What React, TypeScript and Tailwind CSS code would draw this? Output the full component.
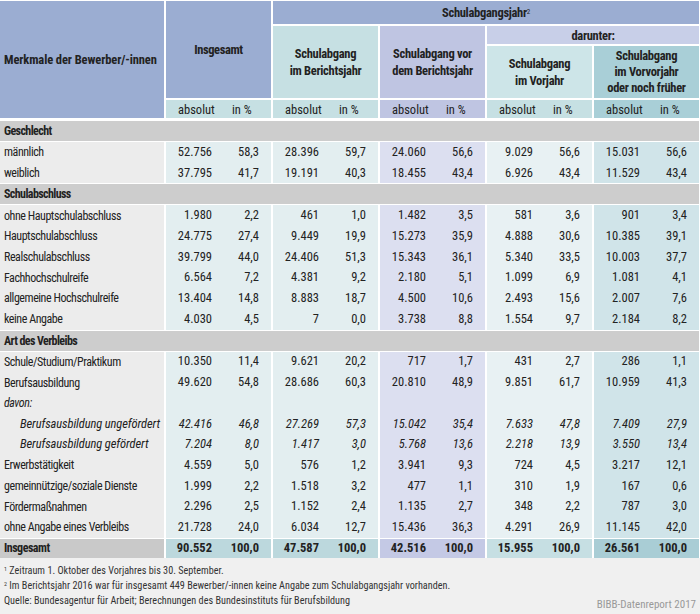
import React from "react";

type Row =
  | { kind: "section"; label: string }
  | { kind: "row"; label: string; vals: string[]; italic?: boolean; indent?: boolean };

const rows: Row[] = [
  { kind: "section", label: "Geschlecht" },
  { kind: "row", label: "männlich", vals: ["52.756", "58,3", "28.396", "59,7", "24.060", "56,6", "9.029", "56,6", "15.031", "56,6"] },
  { kind: "row", label: "weiblich", vals: ["37.795", "41,7", "19.191", "40,3", "18.455", "43,4", "6.926", "43,4", "11.529", "43,4"] },
  { kind: "section", label: "Schulabschluss" },
  { kind: "row", label: "ohne Hauptschulabschluss", vals: ["1.980", "2,2", "461", "1,0", "1.482", "3,5", "581", "3,6", "901", "3,4"] },
  { kind: "row", label: "Hauptschulabschluss", vals: ["24.775", "27,4", "9.449", "19,9", "15.273", "35,9", "4.888", "30,6", "10.385", "39,1"] },
  { kind: "row", label: "Realschulabschluss", vals: ["39.799", "44,0", "24.406", "51,3", "15.343", "36,1", "5.340", "33,5", "10.003", "37,7"] },
  { kind: "row", label: "Fachhochschulreife", vals: ["6.564", "7,2", "4.381", "9,2", "2.180", "5,1", "1.099", "6,9", "1.081", "4,1"] },
  { kind: "row", label: "allgemeine Hochschulreife", vals: ["13.404", "14,8", "8.883", "18,7", "4.500", "10,6", "2.493", "15,6", "2.007", "7,6"] },
  { kind: "row", label: "keine Angabe", vals: ["4.030", "4,5", "7", "0,0", "3.738", "8,8", "1.554", "9,7", "2.184", "8,2"] },
  { kind: "section", label: "Art des Verbleibs" },
  { kind: "row", label: "Schule/Studium/Praktikum", vals: ["10.350", "11,4", "9.621", "20,2", "717", "1,7", "431", "2,7", "286", "1,1"] },
  { kind: "row", label: "Berufsausbildung", vals: ["49.620", "54,8", "28.686", "60,3", "20.810", "48,9", "9.851", "61,7", "10.959", "41,3"] },
  { kind: "row", label: "davon:", vals: ["", "", "", "", "", "", "", "", "", ""], italic: true },
  { kind: "row", label: "Berufsausbildung ungefördert", vals: ["42.416", "46,8", "27.269", "57,3", "15.042", "35,4", "7.633", "47,8", "7.409", "27,9"], italic: true, indent: true },
  { kind: "row", label: "Berufsausbildung gefördert", vals: ["7.204", "8,0", "1.417", "3,0", "5.768", "13,6", "2.218", "13,9", "3.550", "13,4"], italic: true, indent: true },
  { kind: "row", label: "Erwerbstätigkeit", vals: ["4.559", "5,0", "576", "1,2", "3.941", "9,3", "724", "4,5", "3.217", "12,1"] },
  { kind: "row", label: "gemeinnützige/soziale Dienste", vals: ["1.999", "2,2", "1.518", "3,2", "477", "1,1", "310", "1,9", "167", "0,6"] },
  { kind: "row", label: "Fördermaßnahmen", vals: ["2.296", "2,5", "1.152", "2,4", "1.135", "2,7", "348", "2,2", "787", "3,0"] },
  { kind: "row", label: "ohne Angabe eines Verbleibs", vals: ["21.728", "24,0", "6.034", "12,7", "15.436", "36,3", "4.291", "26,9", "11.145", "42,0"] },
];

const totals = ["90.552", "100,0", "47.587", "100,0", "42.516", "100,0", "15.955", "100,0", "26.561", "100,0"];

// column colours, one per group
const dataBg = ["bg-[#e3eef0]", "bg-[#e3eef0]", "bg-[#dcdff0]", "bg-[#e8f1f3]", "bg-[#d0e4e9]"];
const unitBg = ["bg-[#c6e0e3]", "bg-[#c6e0e3]", "bg-[#bfc5e2]", "bg-[#c6e0e3]", "bg-[#a9cfd7]"];
const totalBg = ["bg-[#bcd8dd]", "bg-[#bcd8dd]", "bg-[#c4c9e5]", "bg-[#c6dfe3]", "bg-[#a9cdd5]"];

const font = { fontFamily: '"Liberation Sans Narrow", "Roboto Condensed", "DejaVu Sans Condensed", "Liberation Sans", sans-serif' };

const Pair = ({ a, b, bg, className = "" }: { a: string; b: string; bg: string; className?: string }) => (
  <div className={`flex w-[105px] ${bg} ${className}`}>
    <div className="w-[58px] pr-3 text-right">{a}</div>
    <div className="w-[47px] pr-3 text-right">{b}</div>
  </div>
);

export default function App() {
  return (
    <div className="w-[700px] h-[614px] bg-white text-[12.5px] text-[#222]" style={font}>
      {/* Header */}
      <div className="grid grid-cols-[164px_105px_105px_105px_105px_105px] grid-rows-[23px_18px_52px_18px] gap-[2px] pt-px leading-[17px] font-bold">
        <div className="row-span-4 bg-[#9badd2] flex items-center pl-1 tracking-[-0.1px]">Merkmale der Bewerber/-innen</div>
        <div className="row-span-3 bg-[#9badd2] flex items-center justify-center tracking-[-0.4px]">Insgesamt</div>
        <div className="col-span-4 bg-[#9badd2] flex items-center justify-center tracking-[-0.3px]">
          <span>
            Schulabgangsjahr<sup className="text-[7px] font-normal">2</sup>
          </span>
        </div>
        <div className="row-span-2 bg-[#c6e0e3] flex items-center justify-center text-center tracking-[-0.3px]">
          Schulabgang
          <br />
          im Berichtsjahr
        </div>
        <div className="row-span-2 bg-[#bfc5e2] flex items-center justify-center text-center tracking-[-0.3px]">
          Schulabgang vor
          <br />
          dem Berichtsjahr
        </div>
        <div className="col-span-2 bg-[#c8cfe8] flex items-center justify-center tracking-[-0.3px]">darunter:</div>
        <div className="bg-[#cde5e8] flex items-center justify-center text-center tracking-[-0.3px]">
          Schulabgang
          <br />
          im Vorjahr
        </div>
        <div className="bg-[#a9cfd7] flex items-center justify-center text-center leading-[16px] tracking-[-0.3px]">
          Schulabgang
          <br />
          im Vorvorjahr
          <br />
          oder noch früher
        </div>
        {unitBg.map((bg, i) => (
          <div key={i} className={`flex items-center font-normal ${bg}`}>
            <span className="w-[58px] pl-3">absolut</span>
            <span className="w-[47px] pl-2">in %</span>
          </div>
        ))}
      </div>

      {/* Body */}
      <div className="mt-[2px] flex flex-col">
        {rows.map((r, idx) =>
          r.kind === "section" ? (
            <div key={idx} className="h-[20px] my-px mr-px bg-[#cdcdcd] pl-1 flex items-center font-bold text-[12px] tracking-[-0.6px]">
              {r.label}
            </div>
          ) : (
            <div key={idx} className={`flex h-[20.7px] items-center gap-[2px] ${r.italic ? "italic" : ""}`}>
              <div
                className={`w-[164px] h-full flex items-center bg-[#ececec] ${
                  r.indent ? "pl-[20px] tracking-[-0.1px]" : "pl-1 text-[12px] tracking-[-0.45px]"
                }`}
              >
                {r.label}
              </div>
              {dataBg.map((bg, g) => (
                <Pair key={g} a={r.vals[g * 2]} b={r.vals[g * 2 + 1]} bg={bg} className="h-full items-center" />
              ))}
            </div>
          )
        )}
        <div className="flex h-[19px] mt-px gap-[2px] font-bold">
          <div className="w-[164px] h-full flex items-center pl-1 bg-[#c9c9c9] text-[12px] tracking-[-0.5px]">Insgesamt</div>
          {totalBg.map((bg, g) => (
            <Pair key={g} a={totals[g * 2]} b={totals[g * 2 + 1]} bg={bg} className="h-full items-center" />
          ))}
        </div>
      </div>

      {/* Footnotes */}
      <div className="bg-[#f0f0f0] h-[58px] pl-1 pr-1 pt-[5px] text-[10.2px] text-[#333] leading-[15px]">
        <div>
          <sup className="text-[6px]">1</sup> Zeitraum 1. Oktober des Vorjahres bis 30. September.
        </div>
        <div>
          <sup className="text-[6px]">2</sup> Im Berichtsjahr 2016 war für insgesamt 449 Bewerber/-innen keine Angabe zum Schulabgangsjahr vorhanden.
        </div>
        <div className="flex justify-between items-end">
          <span>Quelle: Bundesagentur für Arbeit; Berechnungen des Bundesinstituts für Berufsbildung</span>
          <span className="text-[#999] text-[11px] translate-y-[4px]">BIBB-Datenreport 2017</span>
        </div>
      </div>
    </div>
  );
}
